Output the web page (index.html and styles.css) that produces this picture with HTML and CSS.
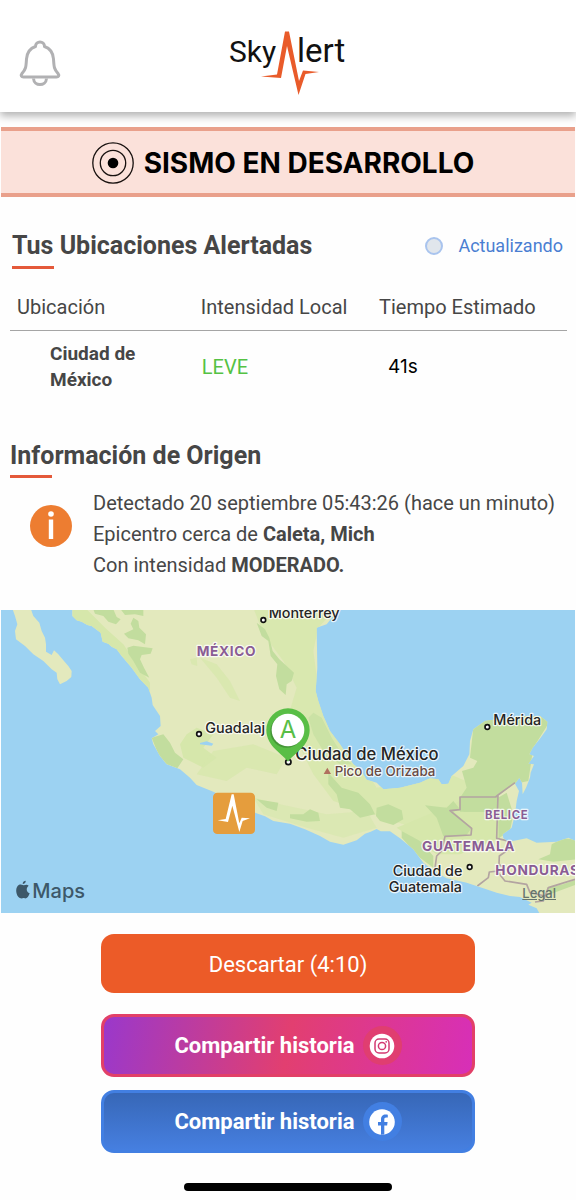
FILE: index.html
```html
<!DOCTYPE html>
<html lang="es">
<head>
<meta charset="utf-8">
<meta name="viewport" content="width=device-width, initial-scale=1">
<title>SkyAlert</title>
<link rel="stylesheet" href="styles.css">
</head>
<body>
<header class="topbar">
  <button class="bell" type="button" aria-label="Notificaciones">
    <svg width="42" height="46" viewBox="0 0 42 46" fill="none" stroke="#b1b1b3" stroke-width="3" stroke-linejoin="round">
      <path d="M16.500 6.500C16.500 0.500 25.500 0.500 25.500 6.500C31.500 8.500 34 13 34.500 19C35 27 35 29 39 33.500C40.500 35.500 39.500 37 37.500 37H4.500C2.500 37 1.500 35.500 3 33.500C7 29 7 27 7.500 19C8 13 10.500 8.500 16.500 6.500Z"/>
      <path d="M14.500 38.500C15 46.500 27 46.500 27.500 38.500"/>
    </svg>
  </button>
  <svg class="logo" width="120" height="68" viewBox="0 0 120 68" role="img" aria-label="SkyAlert">
    <text class="logo-text" x="1" y="34">Sky</text>
    <text class="logo-text wide" x="69" y="34">lert</text>
    <path fill="#e95b2a" d="M33 48.500L49 46.500L57 3.500H61L71 53L75 42.500L91 44L77.500 46L70.500 67L59 18L53 50Z"/>
  </svg>
  <span></span>
</header>

<main>
  <div class="banner">
    <svg width="42" height="42" viewBox="0 0 42 42" fill="none" stroke="#17100e" stroke-width="1.300">
      <circle cx="21" cy="21" r="20.200"/>
      <circle cx="21" cy="21" r="12.700"/>
      <circle cx="21" cy="21" r="5.300" fill="#000" stroke="none"/>
    </svg>
    <h1>SISMO EN DESARROLLO</h1>
  </div>

  <section class="locations">
    <div class="section-head">
      <h2>Tus Ubicaciones Alertadas</h2>
      <span class="status"><span class="dot"></span>Actualizando</span>
    </div>
    <table>
      <thead>
        <tr><th class="c-place">Ubicación</th><th class="c-level">Intensidad Local</th><th>Tiempo Estimado</th></tr>
      </thead>
      <tbody>
        <tr><td class="place">Ciudad de<br>México</td><td class="level">LEVE</td><td class="time">41s</td></tr>
      </tbody>
    </table>
  </section>

  <section class="origin">
    <h2>Información de Origen</h2>
    <div class="details">
      <svg width="42" height="42" viewBox="0 0 42 42">
        <circle cx="21" cy="21" r="21" fill="#ed7d31"/>
        <circle cx="21" cy="9" r="2.800" fill="#fff"/>
        <path d="M18.800 14.500h4.400v19.500h-4.400z" fill="#fff"/>
      </svg>
      <div class="lines">
        <p>Detectado 20 septiembre 05:43:26 (hace un minuto)</p>
        <p>Epicentro cerca de <b>Caleta, Mich</b></p>
        <p>Con intensidad <b>MODERADO.</b></p>
      </div>
    </div>
  </section>

  <div class="map">
    <svg class="map-art" viewBox="3 27 1722 909" role="img" aria-label="Mapa de México">
      <defs>
        <clipPath id="land">
          <path id="mainland" d="M217 20V45L230 58L245 62L262 72L275 75L302 95L308 122L325 128L335 137L350 145L365 165L395 200L420 235L445 260L455 290L458 312L480 345L482 375L465 390L475 400L455 412L460 430L480 465L500 490L540 505L570 530L590 552L640 572L765 635L795 646L820 660L870 668L915 685L960 705L990 722L1030 731L1070 718L1095 698L1112 692L1130 684L1142 691L1170 691L1200 712L1240 745L1270 785L1305 812L1340 832L1400 845L1450 862L1490 875L1530 885L1560 888L1595 905L1585 911L1610 922L1620 940H1730V722L1705 710L1670 722L1610 725L1580 712L1550 718L1525 722L1510 712L1508 700L1535 680L1545 640L1550 600L1557 570L1545 548L1558 530L1566 545L1568 580L1578 560L1590 530L1592 515L1602 490L1585 488L1602 465L1588 460L1598 440L1622 410L1640 385L1642 362L1620 345L1560 345L1510 352L1455 360L1420 385L1410 420L1408 460L1390 495L1355 525L1345 548L1325 550L1315 535L1290 532L1260 545L1200 560L1150 565L1130 545L1100 536L1080 505L1060 490L1020 430L990 390L970 345L955 300L947 270L952 200L950 80L980 70L1020 20Z"/>
        </clipPath>
      </defs>
      <rect x="3" y="27" width="1722" height="909" fill="#9cd2f2"/>
      <path fill="#e3e9bd" d="M38 25H93L100 45L118 65L125 90L135 110L138 130L138 152L155 162L162 148L175 160L190 178L205 195L215 210L214 228L200 240L180 250L172 235L170 215L155 205L130 180L100 160L75 135L48 115L45 90L52 70L45 45Z"/>
      <use href="#mainland" fill="#e3e9bd"/>
      <g clip-path="url(#land)">
        <g fill="#d6e7ab">
          <path d="M210 20L260 25L320 85L370 130L410 190L450 245L450 275L420 240L370 170L300 125L220 60Z"/>
          <path d="M760 20H1010L955 80L940 150L960 300L1080 480L1130 560L1250 540L1350 520L1420 550L1380 650L1300 700L1120 640L1000 600L940 520L860 360L890 260L850 180L790 100Z" opacity=".75"/>
          <path d="M560 400L590 380L640 400L610 440L650 470L610 500L550 470L540 430Z"/>
          <path d="M590 520L640 450L760 430L860 470L830 520L740 500L680 540Z" opacity=".7"/>
          <path d="M760 590L840 610L980 640L1100 630L1130 680L1030 710L920 680L790 640Z" opacity=".6"/>
          <path d="M600 170L650 190L690 240L720 300L690 290L650 230ZM570 175L590 170L592 195L575 190Z" opacity=".7"/>
          <path d="M1190 680L1380 600L1500 630L1500 710L1380 760L1310 760Z"/>
        </g>
        <g fill="#c2dd9e">
          <path d="M280 25H340L350 48L362 55L348 70L325 62L310 45L285 38ZM362 25H430V45L405 40L375 42ZM400 50L415 60L418 80L438 100L435 130L415 118L385 112L372 98L400 85L392 68ZM382 140L400 134L458 142L452 158L425 162L420 175L432 200L448 230L420 215L400 180L385 158Z"/>
          <path d="M455 410L490 400L510 425L525 455L550 475L532 502L500 490L475 460Z"/>
          <path d="M770 65L795 85L808 110L818 150L838 175L882 215L875 240L860 250L857 282L838 265L828 225L832 190L812 165L805 120L785 105Z"/>
          <path d="M925 350L940 335L965 350L995 410L1020 450L1055 490L1020 490L970 450L940 400Z" opacity=".6"/>
          <path d="M985 515L1025 560L1075 575L1110 610L1125 640L1080 650L1050 625L1020 620L1010 580L985 550ZM770 595L835 605L830 630L800 620ZM870 640L910 640L930 625L955 635L960 660L920 662L870 652Z"/>
          <path d="M1130 620L1165 610L1205 628L1210 655L1180 672L1140 660L1128 645Z"/>
          <path d="M1420 380L1455 358L1620 340L1650 360L1600 440L1585 540L1540 550L1494 584V640L1480 632H1380V590L1400 560L1386 510L1420 500L1432 480L1410 470Z"/>
          <path d="M1275 613L1340 620L1360 600L1380 625L1360 632L1415 680L1400 702L1330 706L1310 650ZM1390 588H1490V632H1390ZM1494 590L1520 575L1540 640L1530 690L1496 712ZM1205 690L1260 720L1300 765L1300 800L1260 770L1205 710Z"/>
          <path d="M1615 775L1650 760L1655 730L1690 712L1730 716V775L1660 782ZM1640 860L1690 850L1730 835V850L1650 880Z"/>
        </g>
        <path fill="#9cd2f2" d="M600 426L620 421L640 428L635 434L600 430Z"/>
        <path fill="none" stroke="#b3a4a1" stroke-width="5" stroke-linejoin="round" d="M1545 545L1494 582L1487 588H1380V626L1350 629L1415 682L1413 702L1335 706L1325 750L1310 765L1303 815M1494 582L1490 712L1535 722M1540 735L1498 765L1497 790L1510 800L1495 810L1468 813L1465 830L1432 855M1495 815L1515 840L1580 850L1590 875L1635 885L1630 900L1605 903M1635 885L1645 860L1725 835"/>
      </g>
      <g class="city">
        <g class="pin-dot"><circle cx="790" cy="57" r="7"/><circle cx="597" cy="399" r="7"/><circle cx="865" cy="483" r="8"/><circle cx="1462" cy="378" r="7"/><circle cx="1409" cy="798" r="7"/></g>
        <text x="806" y="52">Monterrey</text>
        <text x="616" y="395">Guadalaj</text>
        <text class="capital" x="886" y="476">Ciudad de México</text>
        <text x="1480" y="373">Mérida</text>
        <text x="1178" y="826">Ciudad de</text>
        <text x="1166" y="872">Guatemala</text>
        <path d="M971 519L982 500L993 519Z" fill="#b0705e"/>
        <text class="peak" x="1004" y="524">Pico de Orizaba</text>
      </g>
      <g class="country">
        <text x="590" y="166">MÉXICO</text>
        <text class="small" x="1455" y="654">BELICE</text>
        <text x="1266" y="750">GUATEMALA</text>
        <text x="1486" y="822">HONDURAS</text>
      </g>
      <path fill="#59be46" d="M864 482C850 460 799 437 799 387A65 65 0 0 1 929 387C929 437 878 460 864 482Z"/>
      <circle cx="860" cy="391" r="49" fill="#397d2e" opacity=".6"/>
      <circle cx="864" cy="387" r="49" fill="#fff"/>
      <text class="pin-letter" x="864" y="411">A</text>
      <rect x="639" y="575" width="126" height="124" rx="13" fill="#e59d3d"/>
      <path fill="#fff" d="M653 658L677 654L695 580H701L718 667L725 650L750 652L728 660L718 693L697 614L684 663Z"/>
      <path fill="#3d5869" d="M69 852C73 855 79 848 86 854C77 861 79 873 89 877C86 887 80 894 74 892C69 890 67 893 62 892C51 890 45 869 51 858C56 849 63 850 69 852ZM68 849C68 842 73 839 77 839C78 844 74 849 68 849Z"/>
      <text class="maps-name" x="97" y="892">Maps</text>
    </svg>
    <a class="legal" href="#legal">Legal</a>
  </div>

  <div class="actions">
    <button class="btn dismiss" type="button">Descartar (4:10)</button>
    <button class="btn share instagram" type="button">Compartir historia
      <span class="badge"><svg width="26" height="26" viewBox="0 0 26 26" fill="none" stroke="#d33a72" stroke-width="1.500">
        <circle cx="13" cy="13" r="12.300" fill="#fff" stroke="none"/>
        <rect x="6" y="6" width="14" height="14" rx="4"/><circle cx="13" cy="13" r="3.600"/><circle cx="17.200" cy="8.800" r=".9" fill="#d33a72" stroke="none"/>
      </svg></span>
    </button>
    <button class="btn share facebook" type="button">Compartir historia
      <span class="badge"><svg width="26" height="26" viewBox="0 0 26 26">
        <circle cx="13" cy="13" r="12.800" fill="#fff"/>
        <path fill="#427fe2" d="M12 25.800V16.500H9V13H12V10.500C12 7 14 5.500 16.500 5.500C17.700 5.500 18.800 5.700 18.800 5.700V8.600H17.200C15.700 8.600 15.300 9.500 15.300 10.500V13H18.600L18.100 16.500H15.300V25.600Z"/>
      </svg></span>
    </button>
  </div>
</main>
<div class="home-bar"></div>
</body>
</html>
```
FILE: styles.css
```css
* { box-sizing: border-box; }

body {
  margin: 0;
  min-height: 100vh;
  background: #fefefe;
  color: #464646;
  font-family: Roboto, "Liberation Sans", sans-serif;
  font-size: 20px;
  line-height: 26px;
}

h1, h2, p { margin: 0; }
button { font-family: inherit; border: 0; cursor: pointer; }
svg { display: block; flex: none; }

.topbar {
  display: grid;
  grid-template-columns: 1fr auto 1fr;
  align-items: start;
  height: 112px;
  padding: 28px 19px 0;
  background: #fff;
  box-shadow: 0 4px 8px rgba(0, 0, 0, .3);
}
.bell { justify-self: start; padding: 12px 0 0; background: none; }
.logo-text { font-size: 30px; fill: #111; }
.logo-text.wide { font-size: 33px; }

main { padding: 15px 1px 0; }

.banner {
  display: flex;
  align-items: center;
  justify-content: center;
  gap: 10px;
  height: 70px;
  padding: 2px 10px 0 0;
  background: #fbe1da;
  border: solid #e9a08b;
  border-width: 4px 0;
}
.banner h1 {
  color: #000;
  font-family: Inter, "Liberation Sans", sans-serif;
  font-size: 28px;
  font-weight: 700;
  line-height: 36px;
}

h2 { font-size: 25px; line-height: 32px; }
h2::after {
  content: "";
  display: block;
  width: 42px;
  height: 3px;
  margin-top: 4px;
  background: #e4593a;
}

.locations { padding: 33px 8px 0 9px; }
.section-head {
  display: flex;
  justify-content: space-between;
  align-items: flex-start;
  padding: 0 4px 0 2px;
}
.status {
  display: flex;
  align-items: center;
  gap: 15px;
  color: #4a7ed2;
  font-size: 18px;
  line-height: 32px;
}
.dot {
  width: 18px;
  height: 18px;
  border: 2px solid #a9c4ee;
  border-radius: 50%;
  background: #e1e6ec;
}

table { width: 100%; margin-top: 15px; border-collapse: collapse; table-layout: fixed; }
th {
  padding: 10px 0 10px 7px;
  border-bottom: 1px solid #a5a5a5;
  font-weight: 400;
  text-align: left;
}
td { padding: 10px 0 0 8px; }
.c-place { width: 33%; }
.c-level { width: 32%; }
.place { padding-left: 40px; font-size: 19px; font-weight: 700; }
.level { color: #55c244; }
.time { padding-left: 16px; color: #000; font-family: Inter, "Liberation Sans", sans-serif; font-size: 19px; }

.origin { padding: 47px 9px 29px; }
.origin h2::after { margin-top: 3px; }
.details { display: flex; align-items: flex-start; gap: 21px; padding: 10px 0 0 20px; }
.details > svg { margin-top: 17px; }
.lines { line-height: 31px; }

.map { position: relative; overflow: hidden; }
.map-art {
  width: 100%;
  height: auto;
  font-family: Inter, "Liberation Sans", sans-serif;
}
.map-art text { paint-order: stroke; stroke: rgba(255, 255, 255, .8); stroke-width: 7px; stroke-linejoin: round; }
.city { font-size: 43px; font-weight: 500; fill: #252525; }
.city .capital { font-size: 50px; }
.city .peak { font-size: 40px; fill: #674a44; }
.pin-dot { fill: #fff; stroke: #111; stroke-width: 5px; }
.country { font-size: 41px; font-weight: 700; fill: #8a5d94; letter-spacing: 2px; }
.country .small { font-size: 34px; }
.map-art .pin-letter { font-size: 72px; font-weight: 400; fill: #59be46; text-anchor: middle; stroke: none; }
.map-art .maps-name { font-size: 60px; font-weight: 500; fill: #3d5869; stroke: none; }
.legal {
  position: absolute;
  right: 19px;
  bottom: 11px;
  color: #65736c;
  font-family: Inter, "Liberation Sans", sans-serif;
  font-size: 13px;
  font-weight: 500;
  line-height: 18px;
}

.actions {
  display: flex;
  flex-direction: column;
  width: 65%;
  margin: 21px auto 0;
}
.btn {
  display: flex;
  align-items: center;
  justify-content: center;
  gap: 8px;
  border-radius: 13px;
  color: #fff;
  font-size: 22px;
  line-height: 30px;
}
.dismiss { height: 59px; padding-top: 3px; background: #ec5b28; }
.share { height: 63px; font-weight: 700; }
.instagram {
  margin: 21px 0 13px;
  border: 3px solid #e24068;
  background: linear-gradient(100deg, #9a38cb, #e23f70 50%, #d72fb8);
}
.facebook { border: 3px solid #427fe2; background: linear-gradient(#3767b7, #467fe0); }
.badge { display: grid; place-items: center; width: 39px; height: 39px; border-radius: 50%; }
.instagram .badge { background: #e03e70; }
.facebook .badge { background: #427fe2; }

.home-bar {
  width: 36%;
  height: 8px;
  margin: 30px auto 10px;
  border-radius: 4px;
  background: #000;
}
```
